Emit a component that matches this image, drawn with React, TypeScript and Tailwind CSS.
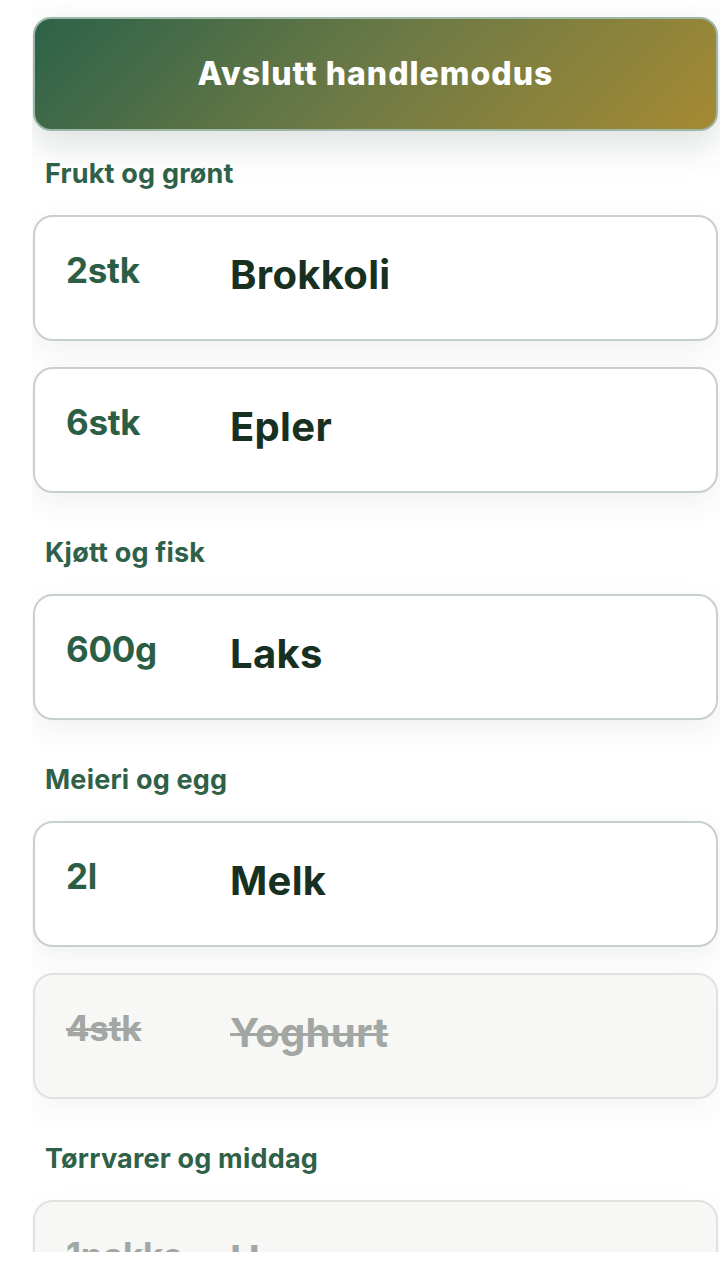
import React from "react";

type Item = { qty: string; name: string; done?: boolean };
type Section = { title: string; items: Item[] };

const sections: Section[] = [
  {
    title: "Frukt og grønt",
    items: [
      { qty: "2stk", name: "Brokkoli" },
      { qty: "6stk", name: "Epler" },
    ],
  },
  { title: "Kjøtt og fisk", items: [{ qty: "600g", name: "Laks" }] },
  {
    title: "Meieri og egg",
    items: [
      { qty: "2l", name: "Melk" },
      { qty: "4stk", name: "Yoghurt", done: true },
    ],
  },
  {
    title: "Tørrvarer og middag",
    items: [{ qty: "1pakke", name: "Havregryn", done: true }],
  },
];

function Card({ item }: { item: Item }) {
  return (
    <div
      className={
        "flex h-[126px] shrink-0 items-start rounded-[20px] border-2 pl-[31px] pt-[36px] " +
        (item.done
          ? "border-[#dfe2df] bg-[#f7f8f6] shadow-[0_10px_30px_rgba(40,60,50,0.05)]"
          : "border-[#c8d0ca] bg-white shadow-[0_10px_30px_rgba(40,60,50,0.07)]")
      }
    >
      <span
        className={
          "w-[164px] shrink-0 text-[35px] font-bold leading-none tracking-[-0.3px] " +
          (item.done
            ? "text-[#a2a7a3] line-through decoration-[3px]"
            : "text-[#2b5e45]")
        }
      >
        {item.qty}
      </span>
      <span
        className={
          "mt-[2px] text-[40px] font-bold leading-none tracking-[0.3px] " +
          (item.done
            ? "text-[#a2a7a3] line-through decoration-[3px]"
            : "text-[#17301f]")
        }
      >
        {item.name}
      </span>
    </div>
  );
}

export default function App() {
  return (
    <div
      className="min-h-[1280px] w-[720px] bg-white pl-[32px]"
      style={{ fontFamily: "Inter, 'Noto Sans', sans-serif" }}
    >
      <div className="h-[1252px] w-[688px] overflow-hidden bg-white pl-[1px] pr-[2px] pt-[17px]">
        <button className="flex h-[114px] w-full items-center justify-center rounded-[18px] border-2 border-[#9db7a6] bg-[linear-gradient(135deg,#2c6249_0%,#6e7a45_50%,#a58a33_100%)] text-[32px] font-extrabold tracking-[1px] text-white shadow-[0_14px_36px_rgba(40,70,55,0.16)]">
          Avslutt handlemodus
        </button>
        <div className="mt-[27px] flex flex-col gap-[44px]">
          {sections.map((s) => (
            <div key={s.title} className="flex flex-col">
              <div className="mb-[25px] pl-[12px] text-[27px] font-bold leading-[32px] tracking-[0.2px] text-[#2f6149]">
                {s.title}
              </div>
              <div className="flex flex-col gap-[26px]">
                {s.items.map((it) => (
                  <Card key={it.name} item={it} />
                ))}
              </div>
            </div>
          ))}
        </div>
      </div>
    </div>
  );
}
